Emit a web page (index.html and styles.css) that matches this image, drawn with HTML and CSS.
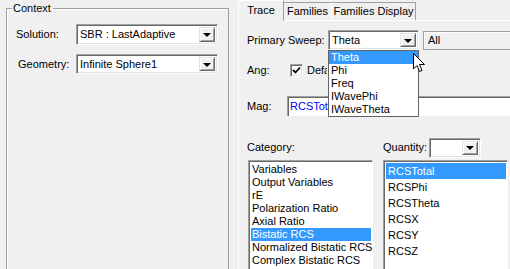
FILE: index.html
```html
<!DOCTYPE html>
<html lang="en">
<head>
    <meta charset="UTF-8">
    <title>Report - Trace</title>
    <link rel="stylesheet" href="styles.css">
</head>
<body>
    <div class="window">

        <!-- Context pane -->
        <div class="context-pane">
            <fieldset class="context">
                <legend>Context</legend>
                <div class="field-row">
                    <label class="field-label">Solution:</label>
                    <div class="combo combo-wide">
                        <span class="combo-text">SBR : LastAdaptive</span>
                        <span class="combo-btn"><span class="arrow"></span></span>
                    </div>
                </div>
                <div class="field-row geometry-row">
                    <label class="field-label indent">Geometry:</label>
                    <div class="combo combo-wide">
                        <span class="combo-text">Infinite Sphere1</span>
                        <span class="combo-btn"><span class="arrow"></span></span>
                    </div>
                </div>
            </fieldset>
        </div>

        <!-- Trace pane -->
        <div class="trace-pane">
            <div class="tabs">
                <div class="tab active tab-trace">Trace</div>
                <div class="tab tab-families">Families</div>
                <div class="tab tab-display">Families Display</div>
            </div>
            <div class="tab-panel">
                <div class="row sweep-row">
                    <span class="row-label sweep-label">Primary Sweep:</span>
                    <div class="combo combo-sweep">
                        <span class="combo-text">Theta</span>
                        <span class="combo-btn"><span class="arrow"></span></span>
                        <ul class="drop-list">
                            <li class="selected">Theta</li>
                            <li>Phi</li>
                            <li>Freq</li>
                            <li>IWavePhi</li>
                            <li>IWaveTheta</li>
                        </ul>
                        <svg class="cursor" width="13" height="20" viewBox="0 0 13 20">
                            <path d="M0.5 0.5 L0.5 16 L4 12.5 L6.5 18.5 L9 17.5 L6.5 11.5 L11.5 11.5 Z" fill="#fff" stroke="#000" stroke-width="1"/>
                        </svg>
                    </div>
                    <div class="all-box">All</div>
                </div>

                <div class="row ang-row">
                    <span class="row-label ang-label">Ang:</span>
                    <span class="checkbox">
                        <svg width="9" height="9" viewBox="0 0 9 9">
                            <path d="M1 4 L3.5 6.5 L8 1.5" fill="none" stroke="#000" stroke-width="1.8"/>
                        </svg>
                    </span>
                    <span class="check-text">Default</span>
                </div>

                <div class="row mag-row">
                    <span class="row-label mag-label">Mag:</span>
                    <div class="textbox"><span class="textbox-text">RCSTotal</span></div>
                </div>

                <div class="row head-row">
                    <span class="row-label cat-label">Category:</span>
                    <span class="qty-label">Quantity:</span>
                    <div class="combo combo-qty">
                        <span class="combo-text"></span>
                        <span class="combo-btn"><span class="arrow"></span></span>
                    </div>
                </div>

                <div class="row lists-row">
                    <ul class="listbox category-list">
                        <li>Variables</li>
                        <li>Output Variables</li>
                        <li>rE</li>
                        <li>Polarization Ratio</li>
                        <li>Axial Ratio</li>
                        <li class="selected">Bistatic RCS</li>
                        <li>Normalized Bistatic RCS</li>
                        <li>Complex Bistatic RCS</li>
                    </ul>
                    <ul class="listbox quantity-list">
                        <li class="selected">RCSTotal</li>
                        <li>RCSPhi</li>
                        <li>RCSTheta</li>
                        <li>RCSX</li>
                        <li>RCSY</li>
                        <li>RCSZ</li>
                    </ul>
                </div>
            </div>
        </div>
    </div>
</body>
</html>
```

FILE: styles.css
```css
/* General */
body {
    margin: 0;
    padding: 0;
    background: #f0f0f0;
    font-family: "Liberation Sans", Arial, sans-serif;
    font-size: 11px;
    line-height: 13px;
    color: #000;
    overflow: hidden;
}

.window {
    display: flex;
    width: 510px;
    height: 269px;
    overflow: hidden;
}

ul {
    list-style: none;
    margin: 0;
    padding: 0;
}

/* Combo boxes */
.combo {
    position: relative;
    flex: none;
    display: flex;
    align-items: center;
    box-sizing: border-box;
    background: #fff;
    border-top: 1px solid #a0a0a0;
    border-left: 1px solid #a0a0a0;
    border-bottom: 1px solid #fff;
    border-right: 1px solid #fff;
    box-shadow: inset 1px 1px 0 #696969, inset -1px -1px 0 #e3e3e3;
}

.combo-text {
    flex: 1;
    padding-left: 3px;
    white-space: nowrap;
    overflow: hidden;
}

.combo-btn {
    display: flex;
    flex: none;
    align-items: center;
    justify-content: center;
    box-sizing: border-box;
    width: 16px;
    height: calc(100% - 4px);
    margin-right: 2px;
    background: #f0f0f0;
    border-top: 1px solid #e3e3e3;
    border-left: 1px solid #e3e3e3;
    border-bottom: 1px solid #696969;
    border-right: 1px solid #696969;
    box-shadow: inset 1px 1px 0 #fff, inset -1px -1px 0 #a0a0a0;
}

.arrow {
    width: 0;
    height: 0;
    border-left: 4px solid transparent;
    border-right: 4px solid transparent;
    border-top: 4px solid #000;
    margin-top: 1px;
}

/* Context pane */
.context-pane {
    width: 232px;
    flex: none;
    padding: 2px 0 0 6px;
}

.context {
    box-sizing: border-box;
    width: 223px;
    height: 300px;
    margin: 0;
    padding: 0;
    border: 1px solid #a0a0a0;
    box-shadow: inset 1px 1px 0 #fff;
}

.context legend {
    margin-left: 5px;
    padding: 0 2px 0 1px;
}

.field-row {
    display: flex;
    align-items: center;
    margin-top: 9px;
}

.field-label {
    flex: none;
    width: 69px;
    padding-left: 9px;
    box-sizing: border-box;
}

.field-label.indent {
    padding-left: 11px;
}

.combo-wide {
    width: 142px;
    height: 21px;
}

.geometry-row .combo-wide {
    height: 20px;
}

/* Trace pane */
.trace-pane {
    flex: 1;
    min-width: 0;
    display: flex;
    flex-direction: column;
}

.tabs {
    display: flex;
    align-items: flex-end;
    height: 22px;
    position: relative;
    z-index: 1;
}

.tab {
    flex: none;
    box-sizing: border-box;
    height: 18px;
    padding-top: 2px;
    text-align: center;
    border: 1px solid #a0a0a0;
    border-bottom: none;
    border-left-color: #fff;
    margin-left: -1px;
    background: #f0f0f0;
    white-space: nowrap;
}

.tab-trace {
    width: 46px;
}

.tab-families {
    width: 49px;
}

.tab-display {
    width: 85px;
}

.tab:first-child {
    margin-left: 0;
}

.tab.active {
    height: 21px;
    margin-bottom: -1px;
    padding-top: 3px;
    border-top-color: #fff;
    z-index: 2;
    position: relative;
}

.tab-panel {
    flex: 1;
    border-top: 1px solid #fff;
    border-left: 1px solid #fff;
    padding-left: 8px;
}

.row {
    display: flex;
    align-items: center;
}

.row-label {
    flex: none;
}

.sweep-row {
    margin-top: 9px;
    height: 20px;
}

.sweep-label {
    width: 81px;
}

.combo-sweep {
    width: 91px;
    height: 20px;
}

.all-box {
    box-sizing: border-box;
    width: 120px;
    height: 19px;
    margin-left: 4px;
    margin-top: 1px;
    padding-left: 4px;
    flex: none;
    border: 1px solid #a0a0a0;
    box-shadow: inset 1px 1px 0 #fff;
    display: flex;
    align-items: center;
}

/* Open drop-down of the primary sweep */
.drop-list {
    position: absolute;
    left: -1px;
    top: 19px;
    width: 91px;
    box-sizing: border-box;
    background: #fff;
    border: 1px solid #646464;
    z-index: 5;
}

.drop-list li {
    height: 13px;
    padding-left: 2px;
}

.drop-list li.selected,
.listbox li.selected {
    background: #3399ff;
    color: #fff;
}

.cursor {
    position: absolute;
    left: 84px;
    top: 22px;
    z-index: 6;
}

.ang-row {
    margin-top: 14px;
    height: 13px;
}

.ang-label {
    width: 43px;
}

.checkbox {
    flex: none;
    box-sizing: border-box;
    width: 13px;
    height: 13px;
    background: #fff;
    border-top: 1px solid #a0a0a0;
    border-left: 1px solid #a0a0a0;
    border-bottom: 1px solid #fff;
    border-right: 1px solid #fff;
    box-shadow: inset 1px 1px 0 #696969, inset -1px -1px 0 #e3e3e3;
    display: flex;
    align-items: center;
    justify-content: center;
}

/* the open list covers the rest of this caption */
.check-text {
    flex: none;
    margin-left: 4px;
    width: 20px;
    overflow: hidden;
    white-space: nowrap;
}

.mag-row {
    margin-top: 19px;
    height: 20px;
}

.mag-label {
    width: 40px;
}

.textbox {
    box-sizing: border-box;
    width: 240px;
    height: 20px;
    flex: none;
    padding-left: 2px;
    background: #fff;
    color: #0000ff;
    border-top: 1px solid #a0a0a0;
    border-left: 1px solid #a0a0a0;
    box-shadow: inset 1px 1px 0 #696969;
    display: flex;
    align-items: center;
}

.textbox-text {
    width: 39px;
    overflow: hidden;
    white-space: nowrap;
}

.head-row {
    margin-top: 22px;
    height: 19px;
}

.cat-label {
    width: 136px;
}

.qty-label {
    flex: none;
    width: 46px;
}

.combo-qty {
    width: 52px;
    height: 20px;
}

.lists-row {
    margin-top: 3px;
    align-items: flex-start;
    gap: 10px;
    padding-left: 1px;
}

.listbox {
    box-sizing: border-box;
    width: 125px;
    height: 130px;
    flex: none;
    background: #fff;
    border-top: 1px solid #a0a0a0;
    border-left: 1px solid #a0a0a0;
    border-bottom: 1px solid #fff;
    border-right: 1px solid #fff;
    box-shadow: inset 1px 1px 0 #696969;
    padding: 2px 1px 0 2px;
}

.category-list li {
    height: 13px;
    padding-left: 1px;
    white-space: nowrap;
}

.quantity-list li {
    height: 16px;
    line-height: 16px;
    padding-left: 2px;
}
```
